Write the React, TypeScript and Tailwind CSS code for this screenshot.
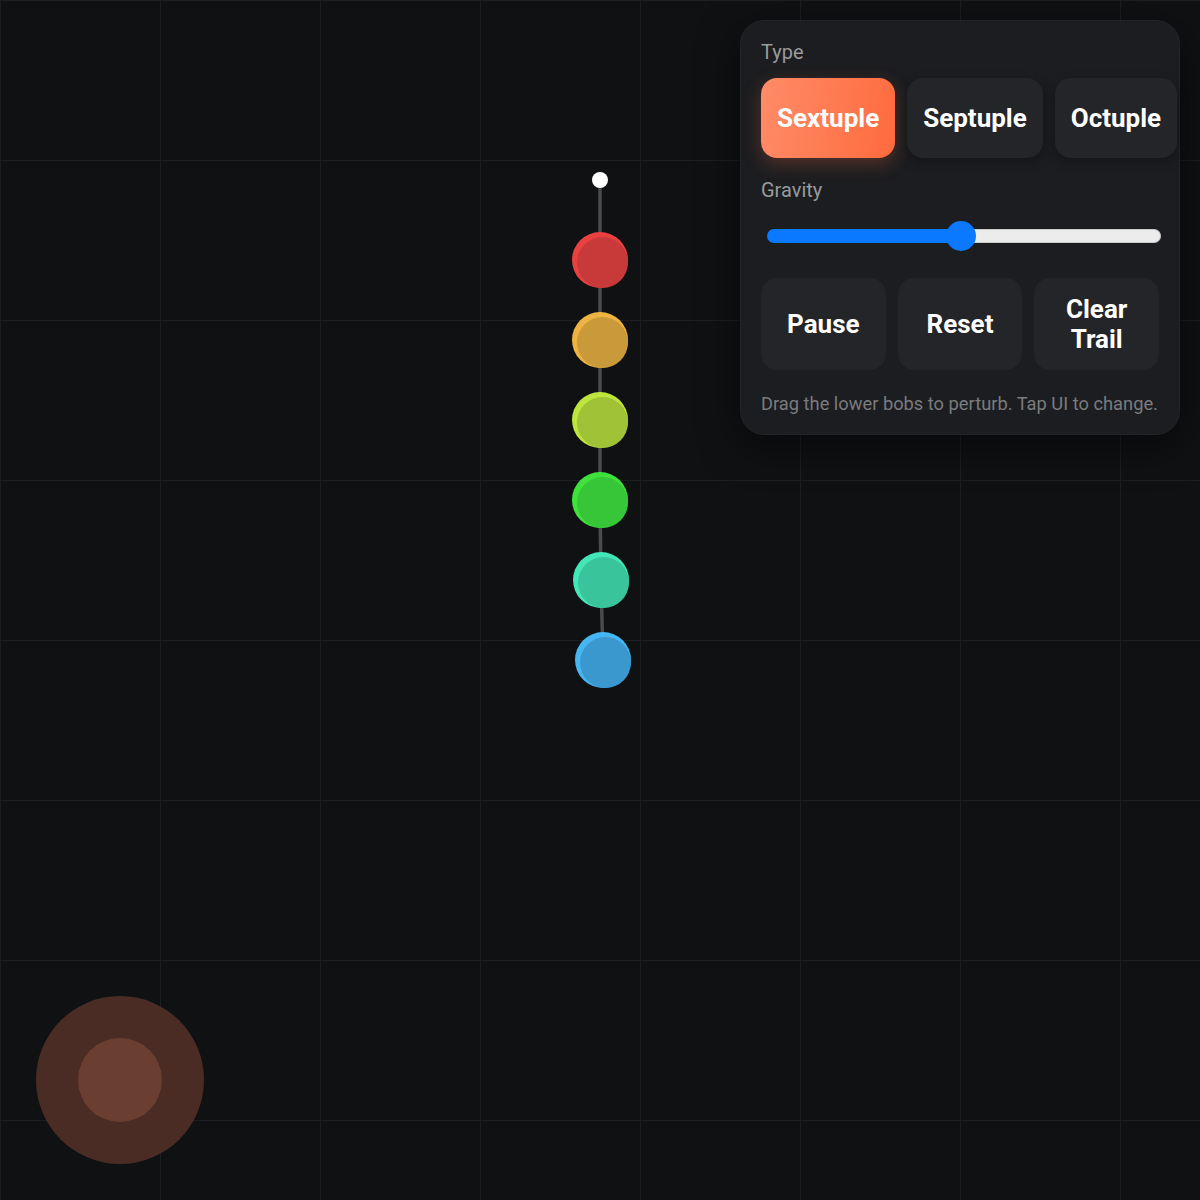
import { useState } from "react";

type Bob = { x: number; y: number; base: string; face: string };

const bobs: Bob[] = [
  { x: 600, y: 260, base: "#e8413f", face: "#c8393a" },
  { x: 600, y: 340, base: "#efb341", face: "#c99a39" },
  { x: 600, y: 420, base: "#bde53c", face: "#9fc237" },
  { x: 600, y: 500, base: "#3fe23b", face: "#37c637" },
  { x: 601, y: 580, base: "#43e6b6", face: "#39c49b" },
  { x: 603, y: 660, base: "#45b6f2", face: "#3b98cf" },
];

const pivot = { x: 600, y: 180 };

function Pendulum() {
  const points = [pivot, ...bobs];
  return (
    <svg className="absolute inset-0" width="1200" height="1200">
      {bobs.map((b, i) => (
        <line
          key={"rod" + i}
          x1={points[i].x}
          y1={points[i].y}
          x2={b.x}
          y2={b.y}
          stroke="#4a4b4d"
          strokeWidth="3.5"
        />
      ))}
      <circle cx={pivot.x} cy={pivot.y} r="8" fill="#ffffff" />
      {bobs.map((b, i) => (
        <g key={"bob" + i}>
          <circle cx={b.x} cy={b.y} r="28" fill={b.base} />
          <circle cx={b.x + 2.5} cy={b.y + 2.5} r="25.5" fill={b.face} />
        </g>
      ))}

      {/* drag joystick */}
      <circle cx="120" cy="1080" r="84" fill="#4a2c25" />
      <circle cx="120" cy="1080" r="42" fill="#6a3f31" />
    </svg>
  );
}

function Slider({ value }: { value: number }) {
  return (
    <div className="flex items-center h-[30px] pl-[6px] -mr-[2px]">
      <div
        className="h-[14px] rounded-l-full bg-[#0a78ff]"
        style={{ width: `${value * 396}px` }}
      />
      <div className="relative z-10 -mx-[15px] w-[30px] h-[30px] shrink-0 rounded-full bg-[#0a78ff]" />
      <div className="flex-1 h-[14px] rounded-r-full bg-[#ececec] border border-[#c9c9c9] border-l-0" />
    </div>
  );
}

export default function App() {
  const [type, setType] = useState("Sextuple");
  const [gravity] = useState(0.49);

  return (
    <main
      className="relative w-[1200px] h-[1200px] overflow-hidden bg-[#0f1113] bg-[linear-gradient(to_right,#1c1e21_1px,transparent_1px),linear-gradient(to_bottom,#1c1e21_1px,transparent_1px)] bg-[size:160px_160px]"
      style={{ fontFamily: "Roboto, 'Noto Sans', sans-serif" }}
    >
      <Pendulum />

      <div className="absolute top-5 right-5 w-[440px] rounded-3xl bg-[#1c1d20] border border-[#222326] px-5 pt-[19px] pb-5 shadow-[0_10px_40px_rgba(0,0,0,0.55)]">
        <div className="text-[20px] leading-6 text-[#9a9a9c]">Type</div>

        <div className="mt-[14px] flex gap-3">
          {["Sextuple", "Septuple", "Octuple"].map((t) => (
            <button
              key={t}
              onClick={() => setType(t)}
              className={
                t === type
                  ? "h-20 shrink-0 px-4 rounded-2xl text-[26px] font-bold text-white bg-[linear-gradient(100deg,#ff8c67,#ff6a3e)] shadow-[0_6px_18px_rgba(255,110,70,0.25)]"
                  : "h-20 shrink-0 px-4 rounded-2xl text-[26px] font-bold text-white bg-[#242528] shadow-[0_4px_12px_rgba(0,0,0,0.3)]"
              }
            >
              {t}
            </button>
          ))}
        </div>

        <div className="mt-5 text-[20px] leading-6 text-[#9a9a9c]">Gravity</div>

        <div className="mt-[19px]">
          <Slider value={gravity} />
        </div>

        <div className="mt-[27px] grid grid-cols-3 gap-3">
          {["Pause", "Reset", "Clear Trail"].map((t) => (
            <button
              key={t}
              className="h-[92px] px-6 rounded-2xl bg-[#242528] text-[26px] leading-[30px] font-bold text-white"
            >
              {t}
            </button>
          ))}
        </div>

        <p className="mt-6 text-[18.3px] leading-5 text-[#7a7b7d] whitespace-nowrap">
          Drag the lower bobs to perturb. Tap UI to change.
        </p>
      </div>
    </main>
  );
}
